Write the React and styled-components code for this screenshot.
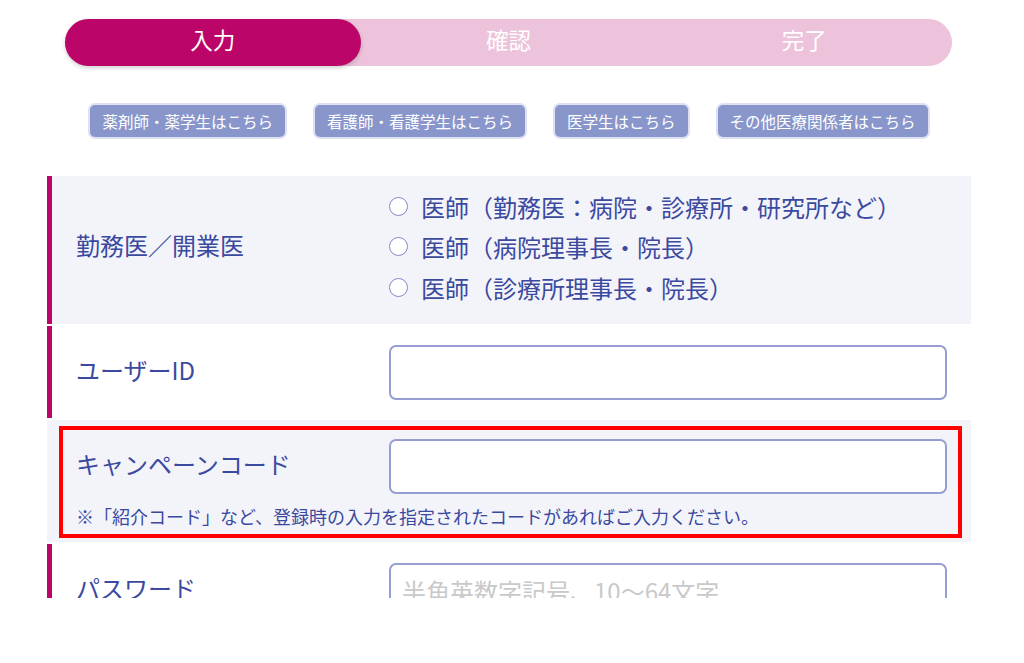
import React from 'react';
import styled, { createGlobalStyle } from 'styled-components';

const GlobalStyle = createGlobalStyle`
  html, body {
    margin: 0;
    padding: 0;
    background: #ffffff;
  }
  body {
    font-family: "Noto Sans CJK JP", "Noto Sans", sans-serif;
  }
  * {
    box-sizing: border-box;
  }
`;

const Page = styled.div`
  height: 598px;
  overflow: hidden;
  padding: 19px 0 0 47px;
`;

const Container = styled.div`
  width: 924px;
`;

const Steps = styled.ol`
  display: flex;
  list-style: none;
  margin: 0 19px 0 18px;
  padding: 0;
  height: 47px;
  background: #ecc3da;
  border-radius: 24px;
`;

const Step = styled.li`
  flex: 1;
  display: flex;
  align-items: center;
  justify-content: center;
  padding-bottom: 6px;
  color: #ffffff;
  font-size: 22.5px;
  line-height: 1;
  border-radius: 24px;
  background: ${p => (p.$active ? '#bc0569' : 'transparent')};
  box-shadow: ${p => (p.$active ? '0 2px 4px rgba(0, 0, 0, 0.18)' : 'none')};
`;

const RoleLinks = styled.div`
  display: flex;
  justify-content: center;
  gap: 26px;
  margin: 37px 0 37px;
`;

const RoleButton = styled.button`
  height: 36px;
  padding: 0 12px;
  background: #8896cb;
  border: 2px solid #dde1f3;
  border-radius: 7px;
  color: #ffffff;
  font-family: inherit;
  font-size: 15.5px;
  cursor: pointer;
`;

const Form = styled.div`
  display: flex;
  flex-direction: column;
  gap: 2px;
`;

const Row = styled.div`
  position: relative;
  display: flex;
  flex-direction: column;
  background: ${p => (p.$shaded ? '#f3f4fa' : '#ffffff')};
  border-left: 5px solid ${p => (p.$required ? '#bc0569' : 'transparent')};
  padding: ${p => p.$pad || '19px 24px 18px 24px'};
`;

const RowMain = styled.div`
  display: flex;
  align-items: center;
`;

const Label = styled.div`
  width: 313px;
  flex-shrink: 0;
  padding-bottom: 5px;
  color: #3b499f;
  font-size: 24px;
  line-height: 1.3;
`;

const Field = styled.div`
  flex: 1;
`;

const RadioList = styled.div`
  display: flex;
  flex-direction: column;
`;

const RadioOption = styled.label`
  display: flex;
  align-items: center;
  height: 40.5px;
  color: #3b499f;
  font-size: 24px;
  cursor: pointer;
`;

const RadioCircle = styled.span`
  width: 19px;
  height: 19px;
  border-radius: 50%;
  border: 1.5px solid #8088c6;
  background: #ffffff;
  margin-right: 13px;
  flex-shrink: 0;
`;

const TextInput = styled.input`
  display: block;
  width: 558px;
  height: 55px;
  padding: 0 11px;
  border: 2px solid #959dd3;
  border-radius: 7px;
  background: #ffffff;
  font-family: inherit;
  font-size: 24px;
  color: #3b499f;
  outline: none;

  &::placeholder {
    color: #c9c9c9;
  }
`;

const Note = styled.p`
  margin: 9px 0 0;
  color: #3b499f;
  font-size: 18px;
  line-height: 26px;
`;

const Highlight = styled.div`
  position: absolute;
  left: 7px;
  right: 9px;
  top: 6px;
  bottom: 4px;
  border: 4px solid #ff0000;
  pointer-events: none;
`;

const steps = ['入力', '確認', '完了'];

const roles = [
  '薬剤師・薬学生はこちら',
  '看護師・看護学生はこちら',
  '医学生はこちら',
  'その他医療関係者はこちら',
];

const doctorTypes = [
  '医師（勤務医：病院・診療所・研究所など）',
  '医師（病院理事長・院長）',
  '医師（診療所理事長・院長）',
];

const App = () => {
  return (
    <>
      <GlobalStyle />
      <Page>
        <Container>
          <Steps>
            {steps.map((s, i) => (
              <Step key={s} $active={i === 0}>{s}</Step>
            ))}
          </Steps>

          <RoleLinks>
            {roles.map(r => (
              <RoleButton key={r} type="button">{r}</RoleButton>
            ))}
          </RoleLinks>

          <Form>
            <Row $required $shaded $pad="10px 24px 16px 24px">
              <RowMain>
                <Label>勤務医／開業医</Label>
                <Field>
                  <RadioList>
                    {doctorTypes.map(t => (
                      <RadioOption key={t}>
                        <RadioCircle />
                        {t}
                      </RadioOption>
                    ))}
                  </RadioList>
                </Field>
              </RowMain>
            </Row>

            <Row $required>
              <RowMain>
                <Label>ユーザーID</Label>
                <Field>
                  <TextInput type="text" />
                </Field>
              </RowMain>
            </Row>

            <Row $shaded $pad="19px 24px 13px 24px">
              <RowMain>
                <Label>キャンペーンコード</Label>
                <Field>
                  <TextInput type="text" />
                </Field>
              </RowMain>
              <Note>※「紹介コード」など、登録時の入力を指定されたコードがあればご入力ください。</Note>
              <Highlight />
            </Row>

            <Row $required>
              <RowMain>
                <Label>パスワード</Label>
                <Field>
                  <TextInput type="password" placeholder="半角英数字記号、10〜64文字" />
                </Field>
              </RowMain>
            </Row>
          </Form>
        </Container>
      </Page>
    </>
  );
};

export default App;
